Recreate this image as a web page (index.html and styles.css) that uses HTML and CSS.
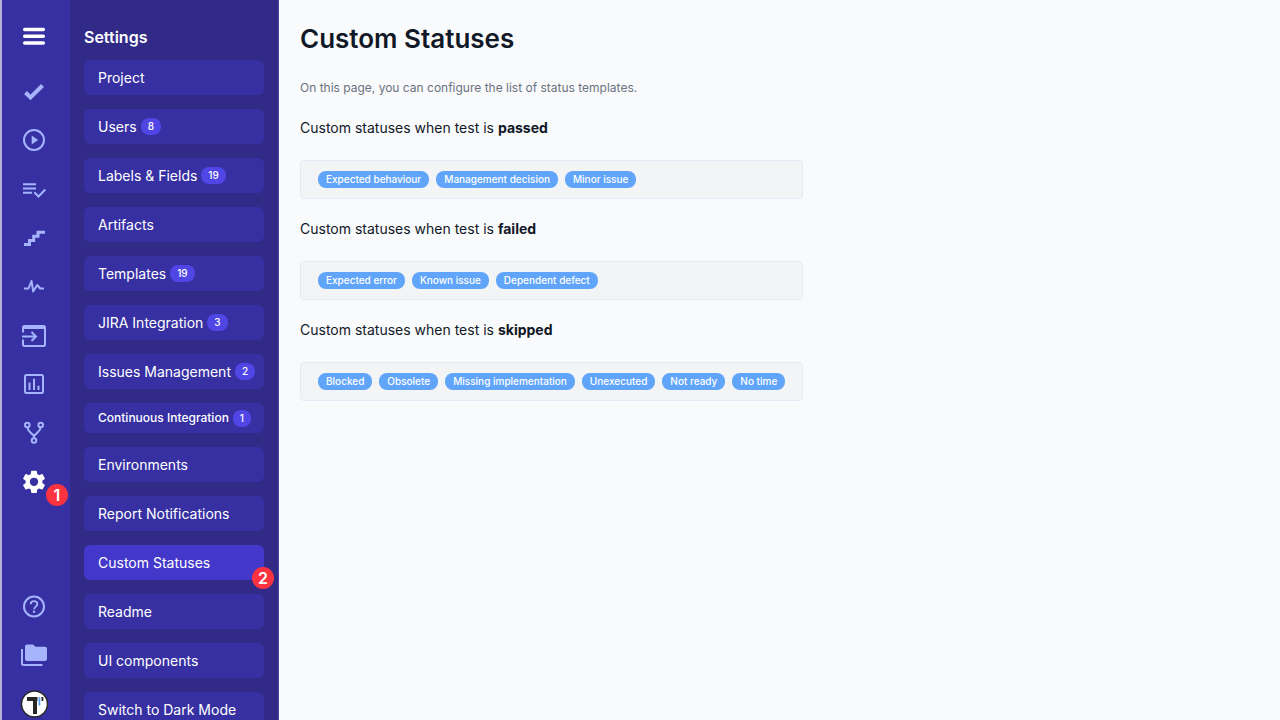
FILE: index.html
```
<!DOCTYPE html>
<html lang="en">
<head>
    <meta charset="UTF-8">
    <meta name="viewport" content="width=device-width, initial-scale=1.0">
    <title>Custom Statuses</title>
    <link rel="stylesheet" href="styles.css">
</head>
<body>
    <nav class="rail" aria-label="Main">
        <button class="menu-button" type="button" aria-label="Menu">
            <svg viewBox="0 0 28 28"><path d="M4.700 7.500h18.600M4.700 14.200h18.600M4.700 20.900h18.600" stroke="currentColor" stroke-width="3.500" stroke-linecap="round"/></svg>
        </button>
        <div class="rail-group">
            <a href="#" aria-label="Tests">
                <svg viewBox="0 0 28 28"><path d="M5.500 15.500l5 5L22.500 8.500" fill="none" stroke="currentColor" stroke-width="4"/></svg>
            </a>
            <a href="#" aria-label="Runs">
                <svg viewBox="0 0 28 28"><circle cx="14" cy="14" r="10" fill="none" stroke="currentColor" stroke-width="2"/><path d="M11.700 9.500v9l6.500-4.500z" fill="currentColor"/></svg>
            </a>
            <a href="#" aria-label="Plans">
                <svg viewBox="0 0 28 28"><path d="M3 9.200h13M3 13.500h13M3 17.700h9M14.300 17.300l4.200 4.200 6.800-7" fill="none" stroke="currentColor" stroke-width="2"/></svg>
            </a>
            <a href="#" aria-label="Steps">
                <svg viewBox="0 0 28 28"><path d="M4 20.500h5.500v-4h4.200v-4.200H18V8.200h7" fill="none" stroke="currentColor" stroke-width="3"/></svg>
            </a>
            <a href="#" aria-label="Pulse">
                <svg viewBox="0 0 28 28"><path d="M4 15.500h4.500L11.500 8l1.700 10.500 4-6.500 3 3.500H24" fill="none" stroke="currentColor" stroke-width="2" stroke-linejoin="round"/></svg>
            </a>
            <a href="#" aria-label="Imports">
                <svg viewBox="0 0 28 28"><path d="M3 10.500V5.500q0-1.500 1.500-1.500h19q1.500 0 1.500 1.500v17q0 1.500-1.500 1.500h-19Q3 24 3 22.500v-5" fill="none" stroke="currentColor" stroke-width="2"/><path d="M3 5.500h22" stroke="currentColor" stroke-width="3"/><path d="M2 14.500h13M11.500 10l4.500 4.500-4.500 4.500" fill="none" stroke="currentColor" stroke-width="2"/></svg>
            </a>
            <a href="#" aria-label="Analytics">
                <svg viewBox="0 0 28 28"><rect x="5" y="4" width="18" height="18" rx="1.500" fill="none" stroke="currentColor" stroke-width="2"/><path d="M9.500 11.500v7.500M14 7.800V19M18.500 14.800V19" stroke="currentColor" stroke-width="2"/></svg>
            </a>
            <a href="#" aria-label="Branches">
                <svg viewBox="0 0 28 28" fill="none" stroke="currentColor" stroke-width="2"><circle cx="7.300" cy="5" r="2.300"/><circle cx="20.700" cy="5" r="2.300"/><circle cx="14" cy="20.500" r="2.300"/><path d="M7.500 7.500q0 2.500 2.500 4.500l4 4v2M20.500 7.500q0 2.500-2.500 4.500l-4 4"/></svg>
            </a>
            <a class="active" href="#" aria-label="Settings">
                <svg viewBox="0 1 24 24"><path fill="currentColor" d="M19.140 12.940c.04-.3.06-.61.06-.94 0-.32-.02-.64-.07-.94l2.030-1.580c.18-.14.23-.41.12-.61l-1.920-3.320c-.12-.22-.37-.29-.59-.22l-2.390.96c-.5-.38-1.030-.7-1.620-.94l-.36-2.540c-.04-.24-.24-.41-.48-.41h-3.840c-.24 0-.43.17-.47.41l-.36 2.540c-.59.24-1.130.57-1.620.94l-2.390-.96c-.22-.08-.47 0-.59.22L2.740 8.870c-.12.21-.08.47.12.61l2.030 1.580c-.05.3-.09.63-.09.94s.02.64.07.94l-2.030 1.580c-.18.14-.23.41-.12.61l1.920 3.320c.12.22.37.29.59.22l2.390-.96c.5.38 1.030.7 1.620.94l.36 2.540c.05.24.24.41.48.41h3.840c.24 0 .44-.17.47-.41l.36-2.540c.59-.24 1.130-.56 1.620-.94l2.390.96c.22.08.47 0 .59-.22l1.920-3.320c.12-.22.07-.47-.12-.61zM12 15.600a3.600 3.600 0 110-7.200 3.600 3.600 0 010 7.200z"/></svg>
                <span class="marker">1</span>
            </a>
        </div>
        <div class="rail-group rail-bottom">
            <a href="#" aria-label="Help">
                <svg viewBox="0 0 28 28"><circle cx="14" cy="14.500" r="10" fill="none" stroke="currentColor" stroke-width="2"/><path d="M10.700 12.300c0-4.300 6.600-4.300 6.600 0 0 2.200-3.200 2.500-3.200 5" fill="none" stroke="currentColor" stroke-width="1.900"/><circle cx="14" cy="19.800" r="1.200" fill="currentColor"/></svg>
            </a>
            <a href="#" aria-label="Projects">
                <svg viewBox="0 0 28 28"><path d="M7 3.500h6l2.500 2.300H25q2 0 2 2V18q0 2-2 2H7q-2 0-2-2V5.500q0-2 2-2z" fill="currentColor"/><path d="M2 8v14.500q0 1.500 1.500 1.500H22.500" fill="none" stroke="currentColor" stroke-width="2"/></svg>
            </a>
            <a href="#" aria-label="Account">
                <svg viewBox="0 0 28 28"><circle cx="14.500" cy="14" r="13" fill="#fff" stroke="#272727" stroke-width="1.500"/><path d="M7 7h10.500v4H17v13h-4V11H7z" fill="#272727"/><path d="M21.500 7h1.800v4h-1.800z" fill="#272727"/><path d="M18.500 7h1.800v8.500h-1.800z" fill="#60a5fa"/></svg>
            </a>
        </div>
    </nav>

    <aside class="settings">
        <h2>Settings</h2>
        <ul>
            <li><a href="#">Project</a></li>
            <li><a href="#">Users <span class="count">8</span></a></li>
            <li><a href="#">Labels &amp; Fields <span class="count">19</span></a></li>
            <li><a href="#">Artifacts</a></li>
            <li><a href="#">Templates <span class="count">19</span></a></li>
            <li><a href="#">JIRA Integration <span class="count">3</span></a></li>
            <li><a href="#">Issues Management <span class="count">2</span></a></li>
            <li><a class="compact" href="#">Continuous Integration <span class="count">1</span></a></li>
            <li><a href="#">Environments</a></li>
            <li><a href="#">Report Notifications</a></li>
            <li><a class="active" href="#">Custom Statuses <span class="marker">2</span></a></li>
            <li><a href="#">Readme</a></li>
            <li><a href="#">UI components</a></li>
            <li><a href="#">Switch to Dark Mode</a></li>
        </ul>
    </aside>

    <main>
        <h1>Custom Statuses</h1>
        <p class="intro">On this page, you can configure the list of status templates.</p>
        <div class="statuses">
            <section>
                <p>Custom statuses when test is <strong>passed</strong></p>
                <div class="tags">
                    <span class="tag">Expected behaviour</span>
                    <span class="tag">Management decision</span>
                    <span class="tag">Minor issue</span>
                </div>
            </section>
            <section>
                <p>Custom statuses when test is <strong>failed</strong></p>
                <div class="tags">
                    <span class="tag">Expected error</span>
                    <span class="tag">Known issue</span>
                    <span class="tag">Dependent defect</span>
                </div>
            </section>
            <section>
                <p>Custom statuses when test is <strong>skipped</strong></p>
                <div class="tags">
                    <span class="tag">Blocked</span>
                    <span class="tag">Obsolete</span>
                    <span class="tag">Missing implementation</span>
                    <span class="tag">Unexecuted</span>
                    <span class="tag">Not ready</span>
                    <span class="tag">No time</span>
                </div>
            </section>
        </div>
    </main>
</body>
</html>
```
FILE: styles.css
```
* {
    box-sizing: border-box;
}
body {
    display: flex;
    height: 100vh;
    margin: 0;
    overflow: hidden;
    background-color: #f9fafc;
    color: #111827;
    font-family: Inter, 'Liberation Sans', sans-serif;
    font-size: 14px;
    line-height: 20px;
}
h1, h2, p, ul {
    margin: 0;
    padding: 0;
}
a {
    color: inherit;
    text-decoration: none;
}
svg {
    display: block;
    width: 28px;
    height: 28px;
}
.rail {
    flex: none;
    display: flex;
    flex-direction: column;
    align-items: center;
    width: 70px;
    padding: 22px 4px 2px 0;
    border-left: 2px solid #b5b3dc;
    background-color: #3730a3;
    color: #a5b4fc;
}
.menu-button {
    margin-bottom: 27px;
    padding: 0;
    border: none;
    background: none;
    color: #fff;
    cursor: pointer;
}
.rail-group {
    display: flex;
    flex-direction: column;
    gap: 21px;
}
.rail-group a {
    position: relative;
}
.rail-group .active {
    color: #fff;
}
.rail-bottom {
    margin-top: auto;
}
.marker {
    position: absolute;
    right: -20px;
    bottom: -9px;
    width: 22px;
    height: 22px;
    border-radius: 50%;
    background-color: #fb3340;
    color: #fff;
    font-size: 16px;
    font-weight: 600;
    line-height: 22px;
    text-align: center;
}
.settings {
    flex: none;
    width: 209px;
    padding: 27px 14px 0;
    border-right: 1px solid #4f46a5;
    background-color: #312a87;
    color: #fff;
}
.settings h2 {
    margin-bottom: 13px;
    font-size: 16px;
    font-weight: 600;
    line-height: 20px;
}
.settings ul {
    display: flex;
    flex-direction: column;
    gap: 14px;
    list-style: none;
}
.settings li a {
    position: relative;
    display: flex;
    align-items: center;
    gap: 4px;
    height: 35px;
    padding: 0 14px;
    border-radius: 6px;
    background-color: #3730a3;
    font-size: 14px;
    white-space: nowrap;
}
.settings li .compact {
    height: 30px;
    font-size: 12px;
    font-weight: 500;
}
.settings li .active {
    background-color: #4338ca;
}
.settings .marker {
    right: -10px;
}
.count {
    padding: 0 7px;
    border-radius: 8px;
    background-color: #4f46e5;
    font-size: 10px;
    font-weight: 500;
    line-height: 17px;
}
main {
    flex: 1;
    padding: 21px;
}
h1 {
    margin-bottom: 21px;
    font-size: 26px;
    font-weight: 600;
    line-height: 36px;
}
.intro {
    color: #6b7280;
    font-size: 12px;
}
.statuses {
    width: fit-content;
}
.statuses section {
    padding-top: 20px;
}
.tags {
    display: flex;
    gap: 7px;
    margin-top: 22px;
    padding: 10px 17px;
    border: 1px solid #e8e9f8;
    border-radius: 4px;
    background-color: #f3f4f6;
}
.tag {
    padding: 0 8px;
    border-radius: 8px;
    background-color: #60a5fa;
    color: #fff;
    font-size: 10px;
    font-weight: 500;
    line-height: 17px;
}
```
